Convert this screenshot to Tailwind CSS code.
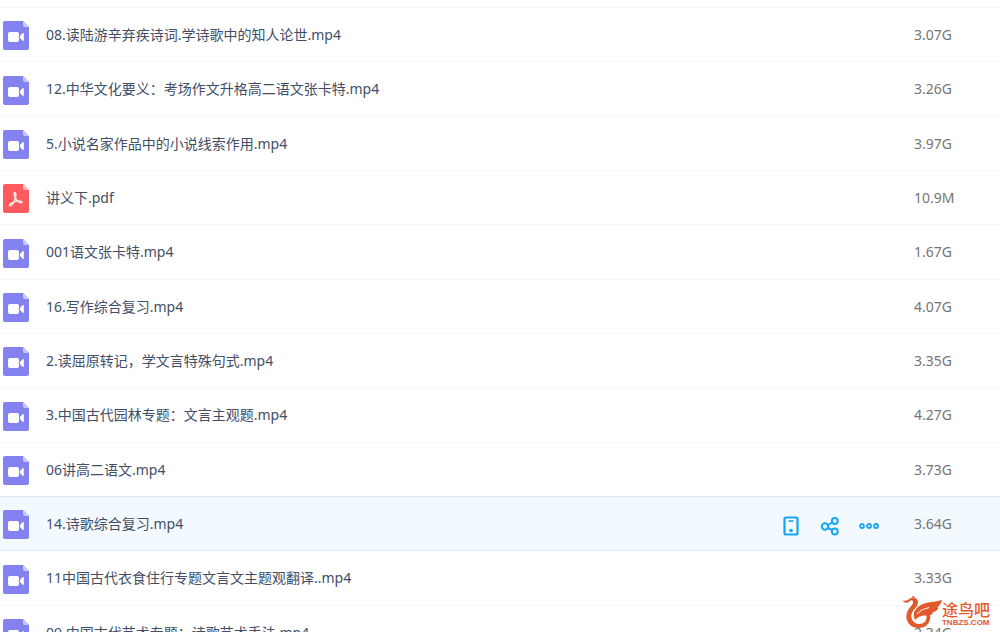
<!DOCTYPE html>
<html lang="zh-CN">
<head>
  <meta charset="UTF-8" />
  <meta name="viewport" content="width=device-width, initial-scale=1" />
  <title>文件列表</title>
  <script src="https://cdn.jsdelivr.net/npm/@tailwindcss/browser@4"></script>
</head>
<body class="relative h-screen overflow-hidden bg-white pt-[7px] font-['Noto_Sans','Noto_Sans_CJK_SC',sans-serif] text-sm text-[#424e67]">

  <!-- Shared icons -->
  <svg class="hidden">
    <symbol id="icon-video" viewBox="0 0 26 29">
      <path fill="#8482f0" d="M2 0h18l6 6v21a2 2 0 0 1-2 2H2a2 2 0 0 1-2-2V2a2 2 0 0 1 2-2z" />
      <path fill="#c9c8fa" d="M20 0l6 6h-4a2 2 0 0 1-2-2z" />
      <rect x="5" y="11" width="11" height="10" rx="2" fill="#fff" />
      <path fill="#fff" d="M17 15l2.600-2.700q1.200-.9 1.200.6v6.200q0 1.500-1.200.6L17 17z" />
    </symbol>
    <symbol id="icon-pdf" viewBox="0 0 26 29">
      <path fill="#ff5b5f" d="M2 0h18l6 6v21a2 2 0 0 1-2 2H2a2 2 0 0 1-2-2V2a2 2 0 0 1 2-2z" />
      <path fill="#ffc0c2" d="M20 0l6 6h-4a2 2 0 0 1-2-2z" />
      <path fill="none" stroke="#ffe6e6" stroke-width="1.500" stroke-linecap="round" stroke-linejoin="round" d="M11.500 8.500c1.600-.2 1.500 3.500.7 6-.9 2.900-3.200 7-5.100 7.300-1.600 0-.5-2.200 2.200-3.200 2.800-1 7-1.900 9-1.200 1.600.8.200 1.900-1.500 1.200-2-.8-4.900-4.200-5.300-6.700-.3-1.700-.5-3.300 0-3.400z" />
    </symbol>
  </svg>

  <table class="w-full table-fixed border-collapse">
    <colgroup>
      <col class="w-[46px]" />
      <col />
      <col class="w-[133px]" />
      <col class="w-[86px]" />
    </colgroup>
    <tbody class="[&>tr]:h-[54px] [&>tr:nth-child(3n+2)]:h-[55px] [&>tr]:border-t [&>tr]:border-[#f2f6fb]">
      <tr>
        <td class="pt-[2px] pl-[3px]"><svg class="h-[29px] w-[26px]"><use href="#icon-video" /></svg></td>
        <td><a href="#">08.读陆游辛弃疾诗词.学诗歌中的知人论世.mp4</a></td>
        <td></td>
        <td class="text-[#757575]">3.07G</td>
      </tr>
      <tr>
        <td class="pt-[2px] pl-[3px]"><svg class="h-[29px] w-[26px]"><use href="#icon-video" /></svg></td>
        <td><a href="#">12.中华文化要义：考场作文升格高二语文张卡特.mp4</a></td>
        <td></td>
        <td class="text-[#757575]">3.26G</td>
      </tr>
      <tr>
        <td class="pt-[2px] pl-[3px]"><svg class="h-[29px] w-[26px]"><use href="#icon-video" /></svg></td>
        <td><a href="#">5.小说名家作品中的小说线索作用.mp4</a></td>
        <td></td>
        <td class="text-[#757575]">3.97G</td>
      </tr>
      <tr>
        <td class="pt-[2px] pl-[3px]"><svg class="h-[29px] w-[26px]"><use href="#icon-pdf" /></svg></td>
        <td><a href="#">讲义下.pdf</a></td>
        <td></td>
        <td class="text-[#757575]">10.9M</td>
      </tr>
      <tr>
        <td class="pt-[2px] pl-[3px]"><svg class="h-[29px] w-[26px]"><use href="#icon-video" /></svg></td>
        <td><a href="#">001语文张卡特.mp4</a></td>
        <td></td>
        <td class="text-[#757575]">1.67G</td>
      </tr>
      <tr>
        <td class="pt-[2px] pl-[3px]"><svg class="h-[29px] w-[26px]"><use href="#icon-video" /></svg></td>
        <td><a href="#">16.写作综合复习.mp4</a></td>
        <td></td>
        <td class="text-[#757575]">4.07G</td>
      </tr>
      <tr>
        <td class="pt-[2px] pl-[3px]"><svg class="h-[29px] w-[26px]"><use href="#icon-video" /></svg></td>
        <td><a href="#">2.读屈原转记，学文言特殊句式.mp4</a></td>
        <td></td>
        <td class="text-[#757575]">3.35G</td>
      </tr>
      <tr>
        <td class="pt-[2px] pl-[3px]"><svg class="h-[29px] w-[26px]"><use href="#icon-video" /></svg></td>
        <td><a href="#">3.中国古代园林专题：文言主观题.mp4</a></td>
        <td></td>
        <td class="text-[#757575]">4.27G</td>
      </tr>
      <tr>
        <td class="pt-[2px] pl-[3px]"><svg class="h-[29px] w-[26px]"><use href="#icon-video" /></svg></td>
        <td><a href="#">06讲高二语文.mp4</a></td>
        <td></td>
        <td class="text-[#757575]">3.73G</td>
      </tr>
      <!-- Active row with its actions -->
      <tr class="border-y border-[#d9ebf7]! bg-[#f2faff]">
        <td class="pt-[2px] pl-[3px]"><svg class="h-[29px] w-[26px]"><use href="#icon-video" /></svg></td>
        <td><a href="#">14.诗歌综合复习.mp4</a></td>
        <td class="pt-1">
          <div class="flex gap-[19px] text-[#16a5f3]">
            <button type="button" aria-label="发送到手机" class="cursor-pointer">
              <svg class="size-5" viewBox="0 0 20 20" fill="none" stroke="currentColor" stroke-width="2.200">
                <rect x="3.500" y="1.500" width="13" height="17" rx="1.500" />
                <path d="M7.500 5h5" stroke-width="1.600" />
                <circle cx="10" cy="14.500" r="1.800" fill="currentColor" stroke="none" />
              </svg>
            </button>
            <button type="button" aria-label="分享" class="cursor-pointer">
              <svg class="size-5" viewBox="0 0 20 20" fill="none" stroke="currentColor" stroke-width="2">
                <circle cx="5" cy="10.500" r="3.200" />
                <circle cx="14.800" cy="5" r="2.900" />
                <circle cx="14.800" cy="15.500" r="2.900" />
                <path d="M8 9l4.300-2.500M8 12l4.300 2.200" />
              </svg>
            </button>
            <button type="button" aria-label="更多" class="cursor-pointer">
              <svg class="size-5" viewBox="0 0 20 20" fill="none" stroke="currentColor" stroke-width="1.800">
                <circle cx="3" cy="10" r="2" />
                <circle cx="10" cy="10" r="2" />
                <circle cx="17" cy="10" r="2" />
              </svg>
            </button>
          </div>
        </td>
        <td class="text-[#757575]">3.64G</td>
      </tr>
      <tr>
        <td class="pt-[2px] pl-[3px]"><svg class="h-[29px] w-[26px]"><use href="#icon-video" /></svg></td>
        <td><a href="#">11中国古代衣食住行专题文言文主题观翻译..mp4</a></td>
        <td></td>
        <td class="text-[#757575]">3.33G</td>
      </tr>
      <tr>
        <td class="pt-[2px] pl-[3px]"><svg class="h-[29px] w-[26px]"><use href="#icon-video" /></svg></td>
        <td><a href="#">09.中国古代艺术专题：诗歌艺术手法.mp4</a></td>
        <td></td>
        <td class="text-[#757575]">2.34G</td>
      </tr>
    </tbody>
  </table>

  <!-- Site mark over the list -->
  <div class="absolute right-[10px] bottom-1 flex items-end text-[#e2592b]">
    <svg class="h-8 w-10" viewBox="0 0 40 32" fill="currentColor">
      <!-- crest, head and neck running into the round body -->
      <path d="M0 4.500q4 .5 6-.5 2-3 6-2.500 4 1 4 5 0 3-3.500 6.500-4 4-3 9 2 6 8 6 6-.5 7-5.500.5-3-1.500-5l4-1q2 3 1 7-2 8-11 8.500-10 0-12.500-9-1-6 3-11 4-4 3.500-6.500-1-2-3-.5-2 2.500-5 1.500-2-1-3-2.500z" />
      <path d="M10 0q2-.5 3 1.500l-2 .3z" />
      <!-- wing -->
      <path d="M13 24q-3-6 1-11 4-5 12-6.500 8-1 14-2.500-1 5-5 7.500 1 .3 2 0-2 4-7 5 .8.500 1.500.5-3 3-8 2.500-6-.5-10.500 4.500z" />
      <path fill="none" stroke="#fff" stroke-width="1" d="M15 18q4-5 12-6.500" />
    </svg>
    <div class="flex flex-col">
      <span class="text-base leading-4 font-medium">途鸟吧</span>
      <span class="font-['Liberation_Sans',sans-serif] text-[8px] leading-[10px] font-bold">TNBZS.COM</span>
    </div>
  </div>
</body>
</html>
